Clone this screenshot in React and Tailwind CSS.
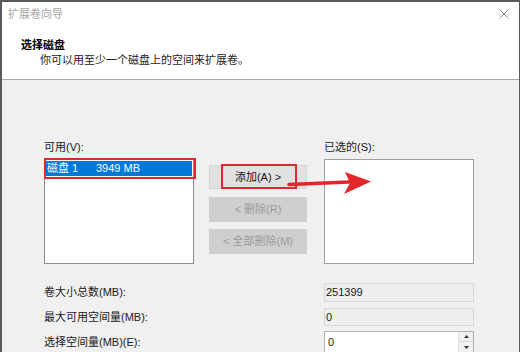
export default function App() {
  return (
    <div className="relative w-[520px] h-[352px] overflow-hidden bg-[#f0f0f0] border-t-2 border-l-2 border-r border-[#5a5a5a] font-['Liberation_Sans','Noto_Sans_CJK_SC',sans-serif] text-[11px] text-[#1a1a1a]">
      {/* header */}
      <div className="h-[78px] bg-white border-b border-[#a8a8a8] pl-[6px] pt-[4px] relative">
        <div className="leading-[16px] text-[#a3a3a3]">扩展卷向导</div>
        <svg className="absolute right-[10px] top-[7px]" width="10" height="10" viewBox="0 0 10 10">
          <path d="M0.5 0.5 L9.5 9.5 M9.5 0.5 L0.5 9.5" stroke="#8a8a8a" strokeWidth="1" fill="none" />
        </svg>
        <div className="mt-[15px] pl-[13px] font-bold leading-[16px] text-black">选择磁盘</div>
        <div className="pl-[32px] leading-[15px] text-[#222]">你可以用至少一个磁盘上的空间来扩展卷。</div>
      </div>

      {/* body */}
      <div className="pl-[42px] pt-[59px]">
        <div className="flex">
          <div className="w-[150px]">
            <div className="leading-[16px]">可用(V):</div>
            <div className="mt-[4px] h-[105px] bg-white border border-[#8c8c8c] p-[1px]">
              <div className="relative flex h-[15px] items-center bg-[#0078d7] text-white leading-[15px]">
                <span className="pl-[1px] w-[50px]">磁盘 1</span>
                <span>3949 MB</span>
                <div className="absolute -top-[3px] -left-[2px] -right-[4px] -bottom-[3px] border-2 border-[#dd2a30]" />
              </div>
            </div>
          </div>

          <div className="ml-[15px] w-[98px] mt-[26px] flex flex-col">
            <div className="relative h-[24px] bg-[#e1e1e1] border border-[#d4d4d4] flex items-center justify-center text-[#111]">
              添加(A) &gt;
              <div className="absolute -top-[2px] left-[11px] right-[9px] -bottom-[1px] border-2 border-[#dd2a30]" />
            </div>
            <div className="mt-[8px] h-[25px] bg-[#cfcfcf] flex items-center justify-center text-[#9c9c9c]">
              &lt; 删除(R)
            </div>
            <div className="mt-[7px] h-[25px] bg-[#cfcfcf] flex items-center justify-center text-[#9c9c9c]">
              &lt; 全部删除(M)
            </div>
          </div>

          <div className="ml-[17px] w-[150px]">
            <div className="leading-[16px]">已选的(S):</div>
            <div className="mt-[4px] h-[105px] bg-white border border-[#a0a0a0]" />
          </div>
        </div>

        <div className="mt-[19px] flex flex-col">
          <div className="flex items-center h-[19px]">
            <div className="w-[280px]">卷大小总数(MB):</div>
            <div className="w-[150px] h-[19px] border border-[#d6d6d6] bg-[#efefef] pl-[1px] leading-[17px]">251399</div>
          </div>
          <div className="mt-[6px] flex items-center h-[18px]">
            <div className="w-[280px]">最大可用空间量(MB):</div>
            <div className="w-[150px] h-[18px] border border-[#d6d6d6] bg-[#efefef] pl-[1px] leading-[16px]">0</div>
          </div>
          <div className="mt-[6px] flex items-center h-[20px]">
            <div className="w-[280px]">选择空间量(MB)(E):</div>
            <div className="w-[150px] h-[22px] border border-[#b0b0b0] bg-white flex">
              <div className="flex-1 pl-[3px] leading-[20px]">0</div>
              <div className="w-[15px] flex flex-col border-l border-[#e0e0e0]">
                <div className="h-[10px] bg-[#f0f0f0] border-b border-[#d8d8d8] flex items-center justify-center">
                  <svg width="5" height="3" viewBox="0 0 5 3"><path d="M0 3 L2.5 0 L5 3 Z" fill="#333" /></svg>
                </div>
                <div className="flex-1 bg-[#f0f0f0] flex items-center justify-center">
                  <svg width="5" height="3" viewBox="0 0 5 3"><path d="M0 0 L2.5 3 L5 0 Z" fill="#333" /></svg>
                </div>
              </div>
            </div>
          </div>
        </div>
      </div>

      {/* red annotation arrow */}
      <svg className="absolute left-[284px] top-[168px]" width="86" height="26" viewBox="0 0 86 26">
        <path d="M3 14.5 L63 12" stroke="#e3262b" strokeWidth="3.5" fill="none" strokeLinecap="round" />
        <path d="M59 2 L85 11.5 L58 24 L64 13 Z" fill="#e3262b" />
      </svg>
    </div>
  );
}
